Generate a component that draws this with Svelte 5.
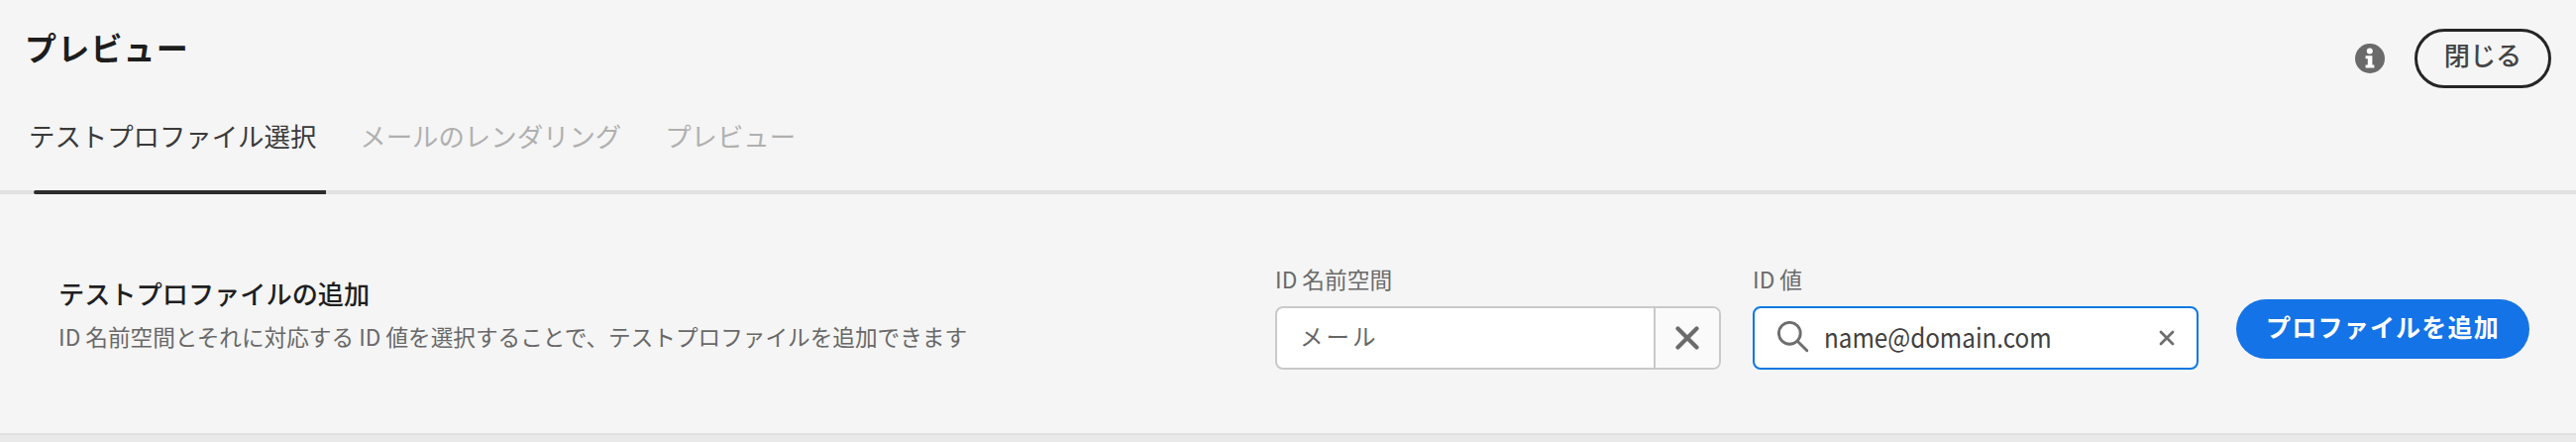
<script>
  const tabs = ['テストプロファイル選択', 'メールのレンダリング', 'プレビュー'];
  let active = $state(0);
</script>

<main>
  <header>
    <h1>プレビュー</h1>
    <div class="actions">
      <svg class="info" viewBox="0 0 30 30" aria-hidden="true">
        <circle cx="15" cy="15" r="15" fill="#6a6a6a" />
        <circle cx="14.8" cy="7.4" r="3" fill="#fff" />
        <path d="M10.6 12.2H17.4V21.5H19.4V24.6H10.6V21.5H12.8V15.2H10.6Z" fill="#fff" />
      </svg>
      <button class="close"><span>閉じる</span></button>
    </div>
  </header>

  <nav>
    {#each tabs as tab, i}
      <button class="tab" class:active={i === active} onclick={() => (active = i)}>{tab}</button>
    {/each}
  </nav>

  <section>
    <div class="intro">
      <h2>テストプロファイルの追加</h2>
      <p>ID 名前空間とそれに対応する ID 値を選択することで、テストプロファイルを追加できます</p>
    </div>
    <div class="field">
      <div class="label">ID 名前空間</div>
      <div class="box">
        <div class="value">メール</div>
        <div class="clear">
          <svg width="24" height="24" viewBox="0 0 24 24"><path d="M2.5 2.5 21.5 21.5M21.5 2.5 2.5 21.5" /></svg>
        </div>
      </div>
    </div>
    <div class="field">
      <div class="label">ID 値</div>
      <div class="box focus">
        <svg class="search" width="32" height="32" viewBox="0 0 32 32">
          <circle cx="12.3" cy="12.3" r="10.9" />
          <path d="M20.2 20.2 29.8 29.8" />
        </svg>
        <div class="email"><span>name@domain.com</span></div>
        <svg class="small" width="16" height="16" viewBox="0 0 16 16"><path d="M2 2 14 14M14 2 2 14" /></svg>
      </div>
    </div>
    <button class="add"><span>プロファイルを追加</span></button>
  </section>
  <footer></footer>
</main>

<style>
  :global(body) {
    margin: 0;
    background: #f5f5f5;
  }
  main {
    width: 2600px;
    height: 446px;
    overflow: hidden;
    display: flex;
    flex-direction: column;
    background: #f5f5f5;
    font-family: "Noto Sans CJK JP", sans-serif;
    color: #2c2c2c;
    white-space: nowrap;
  }
  h1, h2, p {
    margin: 0;
  }
  button {
    font-family: inherit;
    margin: 0;
    padding: 0;
    border: 0;
    background: none;
    box-sizing: border-box;
  }
  svg {
    display: block;
    flex: none;
  }
  svg path {
    stroke-linecap: round;
  }
  header {
    height: 110px;
    box-sizing: border-box;
    padding: 27px 25px 0 25px;
    display: flex;
    justify-content: space-between;
    align-items: flex-start;
  }
  h1 {
    font-size: 32px;
    line-height: 40px;
    letter-spacing: 1.2px;
    font-weight: 700;
    color: #1d1d1d;
  }
  .actions {
    display: flex;
    align-items: center;
    gap: 30px;
    padding-top: 2px;
  }
  .info {
    width: 30px;
    height: 30px;
  }
  .close {
    width: 138px;
    height: 60px;
    border: 3px solid #252525;
    border-radius: 30px;
    font-size: 26.2px;
    line-height: 36px;
    font-weight: 500;
    color: #444;
    padding-bottom: 8px;
  }
  nav {
    height: 86px;
    box-sizing: border-box;
    border-bottom: 4px solid #e1e1e1;
    padding-left: 29px;
    display: flex;
    gap: 44px;
    align-items: flex-start;
  }
  .tab {
    position: relative;
    height: 86px;
    padding: 7px 0 39px;
    font-size: 26.4px;
    line-height: 40px;
    color: #b0b0b0;
  }
  .tab.active {
    color: #3a3a3a;
  }
  .tab.active::after {
    content: "";
    position: absolute;
    left: 5px;
    right: -10px;
    bottom: 0;
    height: 4px;
    border-radius: 2px 0 0 2px;
    background: #2c2c2c;
  }
  section {
    height: 241px;
    box-sizing: border-box;
    padding: 71px 47px 0 59px;
    display: flex;
    align-items: flex-start;
  }
  .intro {
    width: 1228px;
    padding-top: 9px;
  }
  h2 {
    font-size: 26.2px;
    line-height: 40px;
    font-weight: 500;
    color: #1f1f1f;
  }
  p {
    font-size: 22.63px;
    line-height: 32px;
    margin-top: 8px;
    color: #686868;
  }
  .field {
    width: 450px;
    margin-right: 32px;
  }
  .field + .add {
    margin-left: 6px;
  }
  .label {
    font-size: 22.7px;
    line-height: 30px;
    height: 42px;
    color: #6a6a6a;
  }
  .box {
    height: 64px;
    box-sizing: border-box;
    border: 2px solid #c9c9c9;
    border-radius: 8px;
    background: #fff;
    display: flex;
    align-items: center;
    overflow: hidden;
  }
  .value {
    flex: 1;
    padding: 0 0 5px 23px;
    font-size: 23.5px;
    line-height: 36px;
    letter-spacing: 3px;
    color: #666;
  }
  .clear {
    width: 64px;
    height: 60px;
    border-left: 2px solid #c9c9c9;
    background: #fafafa;
    display: flex;
    align-items: center;
    justify-content: center;
  }
  .clear path {
    stroke: #6b6b6b;
    stroke-width: 4.2;
  }
  .focus {
    border-color: #0b78e3;
    padding: 0 22px 0 23px;
  }
  .search {
    fill: none;
    stroke: #6e6e6e;
    stroke-width: 2.9;
    margin-right: 15px;
    margin-top: -3px;
  }
  .email {
    flex: 1;
    font-size: 27px;
    line-height: 36px;
    color: #404040;
    padding-bottom: 2px;
  }
  .email span {
    display: inline-block;
    transform: scaleX(0.897);
    transform-origin: left;
  }
  .small path {
    stroke: #6e6e6e;
    stroke-width: 2.8;
  }
  .add {
    width: 296px;
    height: 60px;
    margin-top: 35px;
    border-radius: 30px;
    background: #1473e6;
    color: #fff;
    font-size: 25px;
    letter-spacing: 1.2px;
    line-height: 36px;
    font-weight: 700;
    padding-bottom: 7px;
  }
  footer {
    height: 9px;
    box-sizing: border-box;
    border-top: 2px solid #e0e0e0;
    background: #e9e9e9;
  }
</style>
